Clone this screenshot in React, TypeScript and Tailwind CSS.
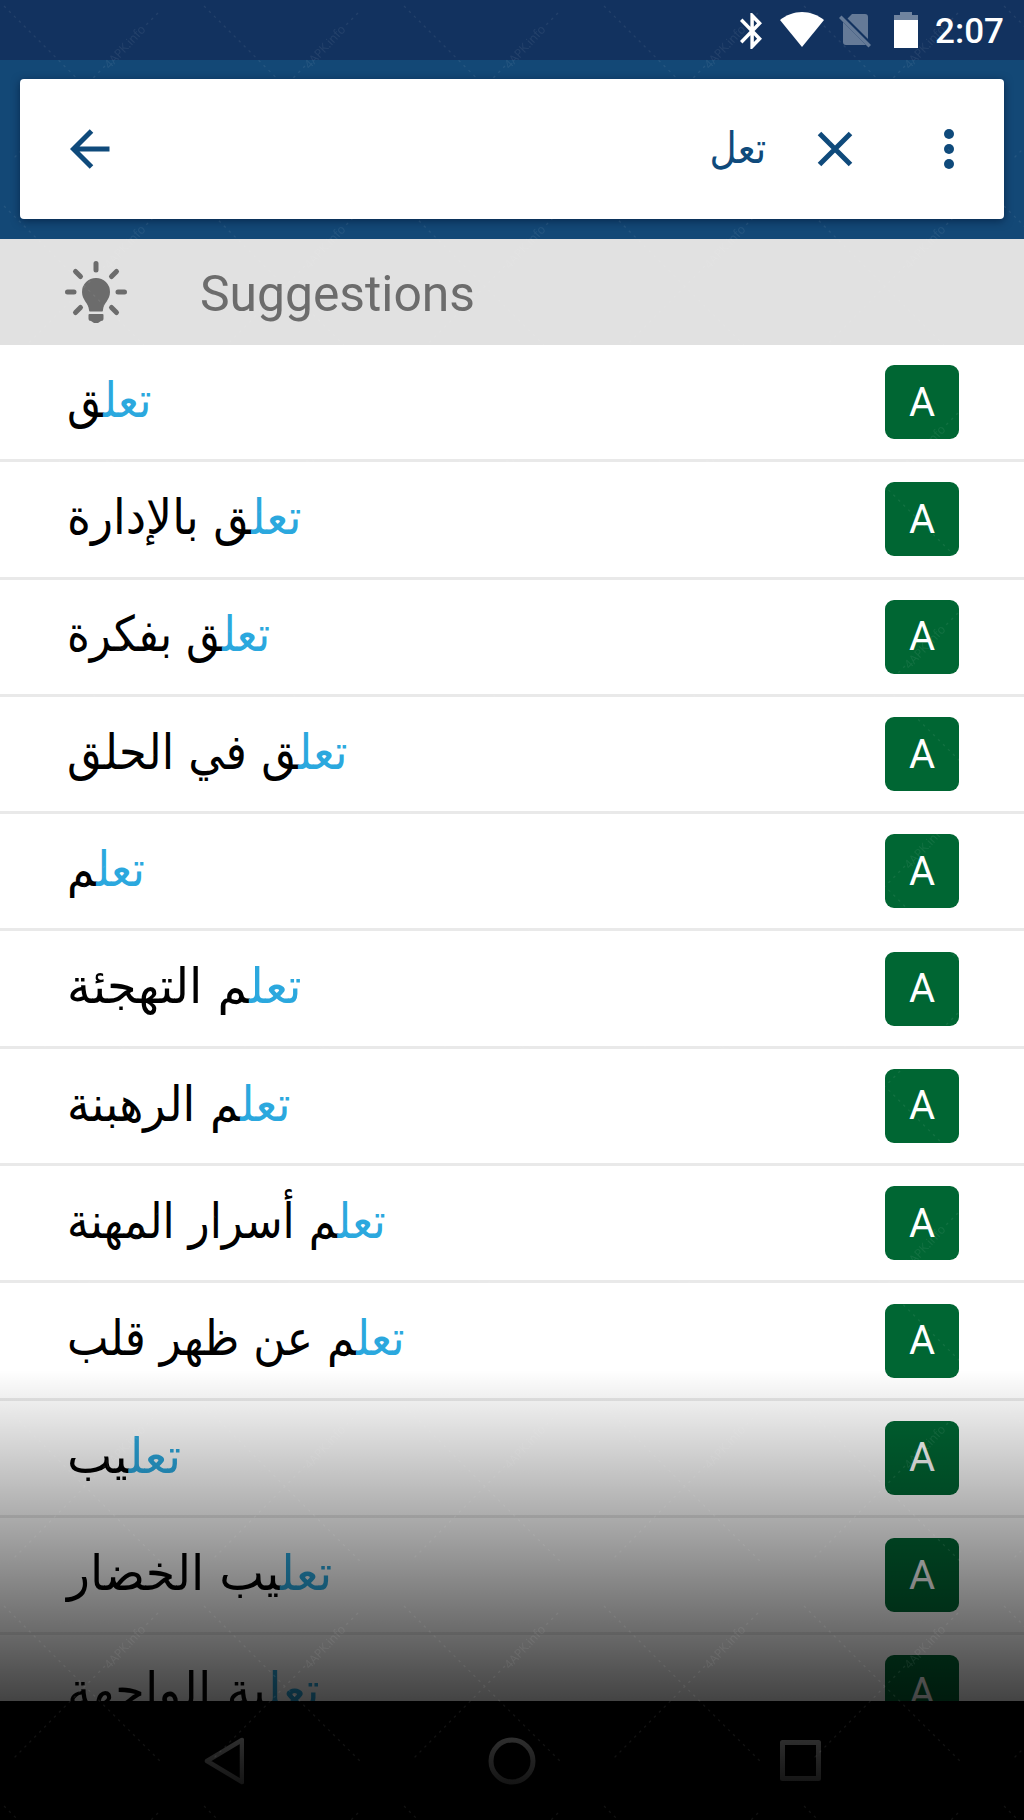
const MATCH = "تعل";

const suggestions = [
  { rest: "ق", scale: 0.895 },
  { rest: "ق بالإدارة", scale: 0.933 },
  { rest: "ق بفكرة", scale: 0.89 },
  { rest: "ق في الحلق", scale: 0.913 },
  { rest: "م", scale: 0.903 },
  { rest: "م التهجئة", scale: 0.976 },
  { rest: "م الرهبنة", scale: 0.935 },
  { rest: "م أسرار المهنة", scale: 0.893 },
  { rest: "م عن ظهر قلب", scale: 0.898 },
  { rest: "يب", scale: 0.98 },
  { rest: "يب الخضار", scale: 0.971 },
  { rest: "ية الواجهة", scale: 0.984 },
];

function StatusBar() {
  return (
    <header className="flex h-[60px] items-center justify-end bg-[#12325f] pr-5 text-white">
      <svg className="mt-px mr-[18px] h-9 w-[22px]" viewBox="5 2 12.710 20" preserveAspectRatio="none" fill="currentColor">
        <path d="M17.710 7.710 12 2h-1v7.590L6.410 5 5 6.410 10.590 12 5 17.590 6.410 19 11 14.410V22h1l5.710-5.710L13.410 12l4.300-4.290zM13 5.830l1.880 1.880L13 9.590V5.830zm1.880 10.460L13 18.170v-3.760l1.880 1.880z" />
      </svg>
      <svg className="mr-[15px] h-9 w-11" viewBox="0 0 44 36" fill="currentColor">
        <path d="M22 35 0 8C6 3 14 0 22 0s16 3 22 8Z" />
      </svg>
      <svg className="mr-[23px] h-9 w-8" viewBox="0 0 32 36" opacity="0.35" fill="currentColor">
        <path d="M13 2H26a3 3 0 0 1 3 3V27L8.500 6.500ZM4 10 27 33H7a3 3 0 0 1-3-3Z" />
        <path d="M2.500 3.500 32 33 29.500 35.500 0 6Z" />
      </svg>
      <svg className="mr-[17px] h-9 w-6" viewBox="0 0 24 36" fill="currentColor">
        <path d="M6 0H18V3H24V8H0V3H6Z" opacity="0.4" />
        <path d="M0 8H24V36H0Z" />
      </svg>
      <span className="pt-[3px] font-[Roboto,sans-serif] text-[35px] leading-none font-medium">2:07</span>
    </header>
  );
}

function SearchBar() {
  return (
    <div className="h-[179px] bg-[#134876] px-5 pt-[19px]">
      <div className="flex h-[140px] items-center rounded-[4px] bg-white text-[#0f4a7b] shadow-[0_2px_8px_rgba(0,20,50,0.6)]">
        <svg className="ml-[50px] h-10 w-10" viewBox="0 0 40 40" fill="none" stroke="currentColor" strokeWidth="5">
          <path d="M39.500 20H4M21.500 2 3.500 20 21.500 38" />
        </svg>
        <span
          dir="rtl"
          className="mr-[51px] ml-auto origin-right scale-x-[0.87] pb-[1px] font-['DejaVu_Sans',sans-serif] text-[43px]"
        >
          {MATCH}
        </span>
        <svg className="mr-[91px] h-9 w-9" viewBox="0 0 36 36" stroke="currentColor" strokeWidth="5">
          <path d="M2.500 2.500 33.500 33.500M33.500 2.500 2.500 33.500" />
        </svg>
        <svg className="mr-[50px] h-10 w-[10px]" viewBox="0 0 10 40" fill="currentColor">
          <circle cx="5" cy="5" r="5" />
          <circle cx="5" cy="20" r="5" />
          <circle cx="5" cy="35" r="5" />
        </svg>
      </div>
    </div>
  );
}

function SectionTitle() {
  return (
    <div className="flex h-[106px] items-center bg-[#e1e1e1] pl-16 text-[#6c6c6c]">
      <svg className="h-[64px] w-[64px]" viewBox="0 0 64 64" fill="currentColor">
        <g stroke="currentColor" strokeWidth="5" strokeLinecap="round">
          <path d="M32 3.500V10M3.500 32H10M54 32H60.500M11.500 11.500 16.500 16.500M52.500 11.500 47.500 16.500M11.500 52.500 16.500 47.500M52.500 52.500 47.500 47.500" />
        </g>
        <path d="M26 51.500Q25 51.500 25 50C24.500 43 18 40 18 32a14 14 0 0 1 28 0C46 40 39.500 43 39 50Q39 51.500 38 51.500Z" />
        <path d="M25.500 54H38.500Q39.500 54 39.500 55V58.500Q39.500 61 37 61L34 63H30L27 61Q24.500 61 24.500 58.500V55Q24.500 54 25.500 54Z" />
      </svg>
      <h2 className="ml-[72px] pt-[5px] font-[Roboto,sans-serif] text-[49.800px]">Suggestions</h2>
    </div>
  );
}

function Suggestion({ rest, scale }: { rest: string; scale: number }) {
  return (
    <li className="flex h-[117.300px] shrink-0 items-center justify-between border-b-[3px] border-[#e9e9e9] pr-[65px] pl-[67px]">
      <span
        dir="rtl"
        className="origin-left pb-[3px] font-['DejaVu_Sans',sans-serif] text-[49px] whitespace-nowrap text-black"
        style={{ transform: `scaleX(${scale})` }}
      >
        <span className="text-[#2ba8de]">{MATCH}</span>
        {rest}
      </span>
      <span className="flex h-[74px] w-[74px] items-center justify-center rounded-[9px] bg-[#006633] pt-[1px] font-[Roboto,sans-serif] text-[40px] text-white">
        A
      </span>
    </li>
  );
}

function NavBar() {
  return (
    <nav className="flex h-[119px] items-center justify-between bg-black pr-[203px] pl-[204px]">
      <svg className="h-12 w-10" viewBox="0 0 40 48" fill="none" stroke="white" strokeWidth="4.500" strokeLinejoin="round">
        <path d="M38 3V45L3 24Z" />
      </svg>
      <svg className="h-12 w-12" viewBox="0 0 48 48" fill="none" stroke="white" strokeWidth="5">
        <circle cx="24" cy="24" r="21" />
      </svg>
      <svg className="h-[41px] w-[41px]" viewBox="0 0 41 41" fill="none" stroke="white" strokeWidth="5" strokeLinejoin="round">
        <rect x="2.500" y="2.500" width="36" height="36" />
      </svg>
    </nav>
  );
}

function Watermark() {
  return (
    <svg className="pointer-events-none absolute inset-0 h-full w-full" opacity="0.07">
      <pattern id="mark" width="200" height="200" patternUnits="userSpaceOnUse">
        <g stroke="white" strokeWidth="1.300" strokeDasharray="2.500 4.500">
          <path d="M4 6 162 163M158 13 145 26M105 66 12 160" />
        </g>
        <text
          x="125"
          y="51"
          transform="rotate(-47 125 47)"
          textAnchor="middle"
          fill="white"
          className="font-['Open_Sans',sans-serif] text-[12px]"
        >
          4APK.info
        </text>
      </pattern>
      <rect width="100%" height="100%" fill="url(#mark)" />
    </svg>
  );
}

export default function App() {
  return (
    <main className="relative flex h-[1820px] w-[1024px] flex-col overflow-hidden bg-white">
      <StatusBar />
      <SearchBar />
      <SectionTitle />
      <ul className="flex min-h-0 flex-1 flex-col overflow-hidden">
        {suggestions.map((item) => (
          <Suggestion key={item.rest} {...item} />
        ))}
      </ul>
      <NavBar />
      <div className="pointer-events-none absolute inset-x-0 bottom-0 h-[450px] bg-linear-to-b from-black/0 to-black" />
      <Watermark />
    </main>
  );
}
